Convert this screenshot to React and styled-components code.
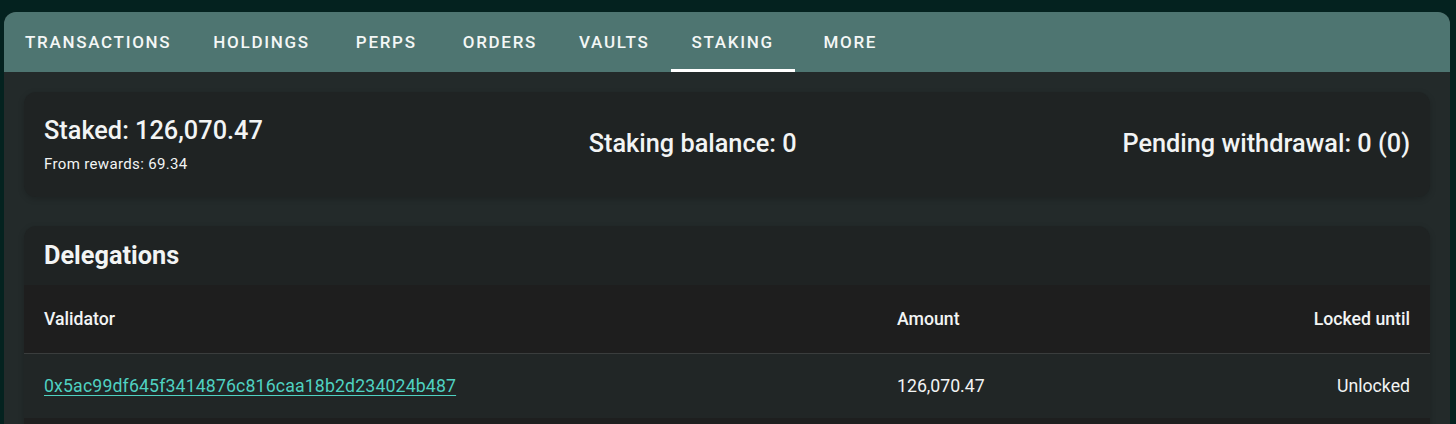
import React, { useState } from 'react';
import styled, { createGlobalStyle } from 'styled-components';

const GlobalStyle = createGlobalStyle`
  html, body {
    margin: 0;
    padding: 0;
    background: #04221f;
    font-family: Roboto, "Noto Sans", sans-serif;
    color: #f2f4f4;
  }
`;

const Page = styled.div`
  padding: 12px 6px 0 4px;
  height: 424px;
  box-sizing: border-box;
  overflow: hidden;
`;

const Panel = styled.div`
  background: #232a2a;
  border-radius: 12px 12px 0 0;
  overflow: hidden;
  height: 100%;
`;

const TabBar = styled.div`
  display: flex;
  height: 60px;
  background: #4e7571;
`;

// min-width keeps the short labels (PERPS, MORE) centred in a wider tab
const Tab = styled.button`
  position: relative;
  min-width: 111px;
  border: 0;
  background: transparent;
  padding: 0 21px;
  font-family: Roboto, sans-serif;
  font-size: 17px;
  font-weight: 500;
  letter-spacing: 1.7px;
  text-transform: uppercase;
  color: #f4f7f6;
  cursor: pointer;

  &::after {
    content: '';
    position: absolute;
    left: 0;
    right: 0;
    bottom: 0;
    height: 3px;
    background: ${p => (p.$active ? '#ffffff' : 'transparent')};
  }
`;

const Content = styled.div`
  padding: 20px;
  display: flex;
  flex-direction: column;
  gap: 29px;
`;

const Card = styled.div`
  background: #1f2323;
  border-radius: 12px;
  box-shadow: 0 2px 6px rgba(0, 0, 0, 0.18);
  overflow: hidden;
`;

const StatsCard = styled(Card)`
  display: flex;
  justify-content: space-between;
  align-items: center;
  padding: 21px 20px 23px;
`;

const StatTitle = styled.div`
  font-size: 25.3px;
  font-weight: 500;
  line-height: 36px;
`;

const StatSub = styled.div`
  font-size: 15px;
  line-height: 20px;
  margin-top: 5px;
  letter-spacing: 0.35px;
`;

const SectionTitle = styled.h2`
  margin: 0;
  padding: 12px 20px 11px;
  font-size: 25.3px;
  font-weight: 700;
  line-height: 36px;
`;

const Table = styled.table`
  width: 100%;
  border-collapse: collapse;
  table-layout: fixed;
  font-size: 17.7px;
`;

const HeadRow = styled.tr`
  background: #1e1e1e;
  height: 68px;
  border-bottom: 1px solid #3a3d3d;
`;

const Th = styled.th`
  padding: 0 20px;
  font-weight: 500;
  text-align: ${p => p.$align || 'left'};
  width: ${p => p.$width || 'auto'};
`;

const BodyRow = styled.tr`
  background: #212626;
  height: 65px;
`;

const FootRow = styled.tr`
  background: #1e1f1f;
  height: 40px;
`;

const Td = styled.td`
  padding: 0 20px;
  text-align: ${p => p.$align || 'left'};
`;

const AddressLink = styled.a`
  color: #4fd1c1;
  text-decoration: underline;
  text-underline-offset: 3px;
  letter-spacing: 0.15px;
  cursor: pointer;
`;

const tabs = ['Transactions', 'Holdings', 'Perps', 'Orders', 'Vaults', 'Staking', 'More'];

const delegations = [
  { validator: '0x5ac99df645f3414876c816caa18b2d234024b487', amount: '126,070.47', locked: 'Unlocked' },
];

export default function App() {
  const [active, setActive] = useState('Staking');

  return (
    <>
      <GlobalStyle />
      <Page>
        <Panel>
          <TabBar>
            {tabs.map(t => (
              <Tab key={t} $active={t === active} onClick={() => setActive(t)}>
                {t}
              </Tab>
            ))}
          </TabBar>
          <Content>
            <StatsCard>
              <div>
                <StatTitle>Staked: 126,070.47</StatTitle>
                <StatSub>From rewards: 69.34</StatSub>
              </div>
              <StatTitle>Staking balance: 0</StatTitle>
              <StatTitle>Pending withdrawal: 0 (0)</StatTitle>
            </StatsCard>
            <Card>
              <SectionTitle>Delegations</SectionTitle>
              <Table>
                <thead>
                  <HeadRow>
                    <Th $width="813px">Validator</Th>
                    <Th $width="260px">Amount</Th>
                    <Th $align="right">Locked until</Th>
                  </HeadRow>
                </thead>
                <tbody>
                  {delegations.map(d => (
                    <BodyRow key={d.validator}>
                      <Td><AddressLink>{d.validator}</AddressLink></Td>
                      <Td>{d.amount}</Td>
                      <Td $align="right">{d.locked}</Td>
                    </BodyRow>
                  ))}
                </tbody>
                <tfoot>
                  <FootRow>
                    <Td colSpan={3} />
                  </FootRow>
                </tfoot>
              </Table>
            </Card>
          </Content>
        </Panel>
      </Page>
    </>
  );
}
